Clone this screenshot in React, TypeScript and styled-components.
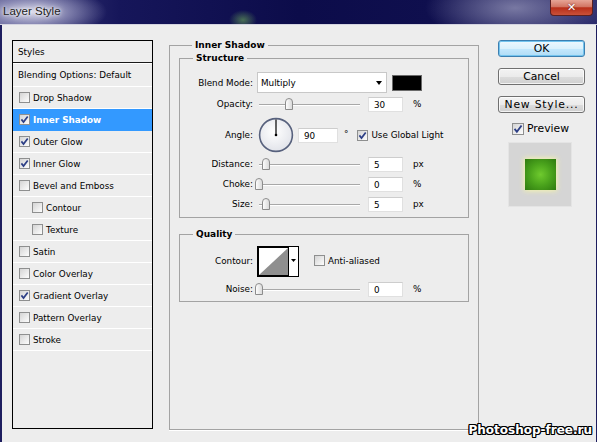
import React from 'react';
import styled, { createGlobalStyle, css } from 'styled-components';

const GlobalStyle = createGlobalStyle`
  html, body {
    margin: 0;
    padding: 0;
    background: #ededed;
  }
  body {
    font-family: "DejaVu Sans", sans-serif;
    font-size: 8.8px;
    color: #000;
  }
`;

const styleItems = [
  { name: 'Drop Shadow', checked: false },
  { name: 'Inner Shadow', checked: true, selected: true },
  { name: 'Outer Glow', checked: true },
  { name: 'Inner Glow', checked: true },
  { name: 'Bevel and Emboss', checked: false },
  { name: 'Contour', checked: false, sub: true },
  { name: 'Texture', checked: false, sub: true },
  { name: 'Satin', checked: false },
  { name: 'Color Overlay', checked: false },
  { name: 'Gradient Overlay', checked: true },
  { name: 'Pattern Overlay', checked: false },
  { name: 'Stroke', checked: false },
];

const App = () => {
  return (
    <Window>
      <GlobalStyle />
      <TitleBar>
        <TitleText>Layer Style</TitleText>
        <CloseButton>✕</CloseButton>
      </TitleBar>
      <Body>
        <StylesPanel>
          <PanelHeader>Styles</PanelHeader>
          <BlendingRow>Blending Options: Default</BlendingRow>
          {styleItems.map((item) => (
            <StyleRow key={item.name} $selected={item.selected} $sub={item.sub}>
              <CheckBox checked={item.checked} />
              <span>{item.name}</span>
            </StyleRow>
          ))}
        </StylesPanel>

        <OuterGroup>
          <Legend>Inner Shadow</Legend>
          <InnerGroup>
            <Legend>Structure</Legend>
            <Row $h={21}>
              <Label>Blend Mode:</Label>
              <Select>
                <span>Multiply</span>
                <Arrow />
              </Select>
              <Swatch />
            </Row>
            <SliderRow label="Opacity:" pos={0.3} value="30" unit="%" top={1} />
            <Row $h={38} $mt={2}>
              <Label>Angle:</Label>
              <Dial />
              <ValueBox $w={40} $ml={4}>90</ValueBox>
              <Degree>°</Degree>
              <CheckBox checked />
              <CheckLabel>Use Global Light</CheckLabel>
            </Row>
            <SliderRow label="Distance:" pos={0.07} value="5" unit="px" />
            <SliderRow label="Choke:" pos={0} value="0" unit="%" />
            <SliderRow label="Size:" pos={0.07} value="5" unit="px" />
          </InnerGroup>
          <InnerGroup $quality>
            <Legend>Quality</Legend>
            <Row $h={30}>
              <Label>Contour:</Label>
              <ContourPicker />
              <AntiAlias>
                <CheckBox checked={false} />
                <CheckLabel>Anti-aliased</CheckLabel>
              </AntiAlias>
            </Row>
            <SliderRow label="Noise:" pos={0} value="0" unit="%" top={3} />
          </InnerGroup>
        </OuterGroup>

        <SideColumn>
          <Button $primary>OK</Button>
          <Button>Cancel</Button>
          <Button $wide>New Style...</Button>
          <PreviewToggle>
            <CheckBox checked size={12} />
            <span>Preview</span>
          </PreviewToggle>
          <PreviewBox>
            <PreviewSquare />
          </PreviewBox>
        </SideColumn>
      </Body>
      <Watermark>Photoshop-free.ru</Watermark>
    </Window>
  );
};

export default App;

const CheckBox = ({ checked, size = 11 }: { checked?: boolean; size?: number }) => (
  <Box $size={size}>
    {checked && (
      <svg width={size - 2} height={size - 2} viewBox="0 0 9 9">
        <path d="M1.4 4.4 L3.5 7 L7.7 1.4" fill="none" stroke="#2d3f86" strokeWidth="1.7" />
      </svg>
    )}
  </Box>
);

const SliderRow = ({
  label,
  pos,
  value,
  unit,
  top = 0,
}: {
  label: string;
  pos: number;
  value: string;
  unit: string;
  top?: number;
}) => (
  <Row $h={20} $mt={top}>
    <Label>{label}</Label>
    <SliderWrap>
      <Track />
      <Thumb width="8" height="12" viewBox="0 0 8 12" style={{ left: Math.round(pos * 101 - 2) }}>
        <defs>
          <linearGradient id="thumbFill" x1="0" y1="0" x2="1" y2="0">
            <stop offset="0" stopColor="#ffffff" />
            <stop offset="1" stopColor="#d8d8d8" />
          </linearGradient>
        </defs>
        <path
          d="M0.5 11.5 V4 Q0.5 0.5 4 0.5 Q7.5 0.5 7.5 4 V11.5 Z"
          fill="url(#thumbFill)"
          stroke="#8c8c8c"
        />
      </Thumb>
    </SliderWrap>
    <ValueBox $w={35} $ml={8}>{value}</ValueBox>
    <Unit>{unit}</Unit>
  </Row>
);

const Dial = () => (
  <DialSvg width="36" height="36" viewBox="0 0 36 36">
    <defs>
      <radialGradient id="dialFill" cx="45%" cy="40%" r="60%">
        <stop offset="0" stopColor="#ffffff" />
        <stop offset="1" stopColor="#e2e4ea" />
      </radialGradient>
    </defs>
    <circle cx="18" cy="18" r="16.4" fill="url(#dialFill)" stroke="#57617d" strokeWidth="1.6" />
    <line x1="18" y1="18" x2="18" y2="2.4" stroke="#000" strokeWidth="1.2" />
    <circle cx="18" cy="18" r="1.3" fill="#000" />
  </DialSvg>
);

const ContourPicker = () => (
  <svg width="42" height="31" viewBox="0 0 42 31" style={{ flexShrink: 0 }}>
    <rect x="0" y="0" width="42" height="31" fill="#000" />
    <rect x="2" y="2" width="29" height="27" fill="#fff" />
    <polygon points="2,29 31,2 31,29" fill="#8f8f8f" />
    <rect x="32" y="1" width="9" height="29" fill="#fff" />
    <polygon points="34,13 39,13 36.5,16" fill="#000" />
  </svg>
);

const Window = styled.div`
  position: relative;
  width: 597px;
  height: 442px;
  display: flex;
  flex-direction: column;
  background: #ededed;
  overflow: hidden;
`;

const TitleBar = styled.div`
  height: 24px;
  flex-shrink: 0;
  display: flex;
  align-items: flex-start;
  border-bottom: 1px solid #d4d4e0;
  background:
    radial-gradient(ellipse 75px 26px at 32px 12px, rgba(226, 226, 240, 0.95), rgba(170, 170, 205, 0.65) 50%, rgba(40, 40, 100, 0) 100%),
    radial-gradient(ellipse 14px 10px at 243px 20px, rgba(120, 190, 90, 0.55), rgba(120, 190, 90, 0)),
    radial-gradient(ellipse 90px 34px at 515px 8px, rgba(130, 130, 170, 0.9), rgba(60, 60, 120, 0) 100%),
    linear-gradient(90deg, #40407e 0%, #16165a 20%, #0c0c4a 50%, #0f0f4e 72%, #2c2c6c 100%);
`;

const TitleText = styled.div`
  padding: 5px 0 0 3px;
  font-family: "Liberation Sans", Arial, sans-serif;
  font-size: 11.5px;
  color: #222;
  text-shadow: 0 0 6px #fff, 0 0 3px #fff;
`;

const CloseButton = styled.div`
  margin-left: auto;
  margin-right: 4px;
  width: 43px;
  height: 16px;
  box-sizing: border-box;
  display: flex;
  align-items: center;
  justify-content: center;
  border: 1px solid #5c2020;
  border-top: none;
  border-radius: 0 0 4px 4px;
  background: linear-gradient(#e6a596 0%, #d27563 45%, #b92f19 52%, #c9513a 100%);
  color: #fff;
  font-family: "DejaVu Sans", sans-serif;
  font-weight: bold;
  font-size: 11px;
  text-shadow: 0 0 2px #5a1010;
`;

const Body = styled.div`
  flex: 1;
  display: flex;
  align-items: flex-start;
  padding: 15px 0 0 10px;
  border-left: 2px solid #1d1d5e;
  border-right: 1px solid #1d1d5e;
`;

const StylesPanel = styled.div`
  width: 141px;
  height: 389px;
  box-sizing: border-box;
  flex-shrink: 0;
  border: 1px solid #000;
  display: flex;
  flex-direction: column;
`;

const PanelHeader = styled.div`
  height: 21px;
  display: flex;
  align-items: center;
  padding-left: 5px;
  border-bottom: 1px solid #1a1a1a;
  box-shadow: 0 1px 0 #fff;
`;

const BlendingRow = styled.div`
  height: 22px;
  display: flex;
  align-items: center;
  padding: 1px 0 0 5px;
  border-bottom: 1px solid #fff;
`;

const StyleRow = styled.div<{ $selected?: boolean; $sub?: boolean }>`
  height: 21px;
  display: flex;
  align-items: center;
  gap: 3px;
  padding-left: ${(p) => (p.$sub ? 19 : 6)}px;
  border-bottom: 1px solid #fff;
  ${(p) =>
    p.$selected &&
    css`
      background: #3399ff;
      color: #fff;
      font-weight: bold;
      border-bottom-color: #3399ff;
    `}
`;

const Box = styled.span<{ $size: number }>`
  width: ${(p) => p.$size}px;
  height: ${(p) => p.$size}px;
  box-sizing: border-box;
  flex-shrink: 0;
  display: inline-flex;
  align-items: center;
  justify-content: center;
  border: 1px solid #8e8f8f;
  background: linear-gradient(135deg, #d4d4d4 0%, #efefef 65%, #fdfdfd 100%);
`;

const OuterGroup = styled.fieldset`
  margin: 0 0 0 16px;
  padding: 2px 9px 0;
  width: 310px;
  height: 390px;
  box-sizing: border-box;
  flex-shrink: 0;
  border: 1px solid #a3a3a3;
  box-shadow: 0 1px 0 #fff;
`;

const InnerGroup = styled.fieldset<{ $quality?: boolean }>`
  margin: ${(p) => (p.$quality ? '11px 0 0' : '0')};
  padding: ${(p) => (p.$quality ? 6 : 8)}px 0 ${(p) => (p.$quality ? 2 : 3)}px;
  border: 1px solid #a3a3a3;
  min-width: 0;
`;

const Legend = styled.legend`
  margin-left: 13px;
  padding: 0 3px;
  line-height: 11px;
  font-weight: bold;
  font-size: 9px;
`;

const Row = styled.div<{ $h: number; $mt?: number }>`
  height: ${(p) => p.$h}px;
  margin-top: ${(p) => p.$mt || 0}px;
  display: flex;
  align-items: center;
`;

const Label = styled.span`
  width: 73px;
  margin-right: 4px;
  text-align: right;
  flex-shrink: 0;
`;

const Select = styled.div`
  width: 130px;
  height: 21px;
  box-sizing: border-box;
  display: flex;
  align-items: center;
  justify-content: space-between;
  padding: 1px 4px 0 3px;
  background: #fff;
  border: 1px solid #c8c8c8;
`;

const Arrow = styled.span`
  width: 0;
  height: 0;
  border-left: 3.5px solid transparent;
  border-right: 3.5px solid transparent;
  border-top: 4px solid #000;
`;

const Swatch = styled.div`
  margin-left: 5px;
  width: 30px;
  height: 16px;
  box-sizing: border-box;
  background: #000;
  border: 1px solid #6a6a6a;
`;

const SliderWrap = styled.div`
  position: relative;
  width: 103px;
  height: 12px;
  flex-shrink: 0;
`;

const Track = styled.div`
  position: absolute;
  left: 2px;
  right: 0;
  top: 6px;
  height: 1px;
  background: #a8a8a8;
  box-shadow: 0 1px 0 #fff;
`;

const Thumb = styled.svg`
  position: absolute;
  top: 0;
`;

const ValueBox = styled.div<{ $w: number; $ml: number }>`
  width: ${(p) => p.$w}px;
  height: 15px;
  margin-left: ${(p) => p.$ml}px;
  box-sizing: border-box;
  flex-shrink: 0;
  display: flex;
  align-items: center;
  padding: 1px 0 0 5px;
  background: #fff;
  border: 1px solid #e0e0e0;
  border-top-color: #cdcdcd;
`;

const Unit = styled.span`
  margin-left: 10px;
`;

const DialSvg = styled.svg`
  margin-left: 1px;
  flex-shrink: 0;
`;

const Degree = styled.span`
  margin: -3px 9px 0 6px;
`;

const CheckLabel = styled.span`
  margin-left: 3px;
`;

const AntiAlias = styled.div`
  margin-left: 15px;
  margin-bottom: 1px;
  display: flex;
  align-items: center;
`;

const SideColumn = styled.div`
  margin-left: 19px;
  width: 87px;
  flex-shrink: 0;
  display: flex;
  flex-direction: column;
  gap: 11px;
  font-size: 10.8px;
`;

const Button = styled.button<{ $primary?: boolean; $wide?: boolean }>`
  width: 87px;
  height: 17px;
  padding: 0;
  box-sizing: border-box;
  font-family: "DejaVu Sans", sans-serif;
  font-size: 10.8px;
  line-height: 15px;
  color: #000;
  letter-spacing: ${(p) => (p.$wide ? '0.8px' : '0')};
  border: 1px solid #707070;
  border-radius: 3px;
  background: linear-gradient(#f3f3f3 0%, #ebebeb 50%, #dddddd 51%, #cfcfcf 100%);
  box-shadow: inset 0 0 0 1px rgba(255, 255, 255, 0.75);
  ${(p) =>
    p.$primary &&
    css`
      border-color: #3c7fb1;
      background: linear-gradient(#eef8fe 0%, #dcf1fc 50%, #c4e8fd 51%, #b0dcf6 100%);
      box-shadow: inset 0 0 0 1px #74c4ee;
    `}
`;

const PreviewToggle = styled.div`
  margin-top: -2px;
  padding-left: 14px;
  display: flex;
  align-items: center;
  gap: 3px;
`;

const PreviewBox = styled.div`
  margin: -4px 0 0 10px;
  width: 64px;
  height: 65px;
  box-sizing: border-box;
  display: flex;
  align-items: center;
  justify-content: center;
  background: #d5d5d5;
  border: 1px solid #e4e4e4;
`;

const PreviewSquare = styled.div`
  width: 31px;
  height: 31px;
  background: radial-gradient(circle at 50% 50%, #6fca2e 0%, #4aa31c 50%, #2e7a0f 100%);
  box-shadow: 0 0 5px 1px rgba(246, 246, 170, 0.95);
`;

const Watermark = styled.div`
  position: absolute;
  right: 5px;
  bottom: 5px;
  font-family: "DejaVu Sans", sans-serif;
  font-weight: bold;
  font-size: 12px;
  color: #fff;
  text-shadow: 1px 0 0 #000, -1px 0 0 #000, 0 1px 0 #000, 0 -1px 0 #000, 1px 1px 0 #000, -1px -1px 0 #000,
    1px -1px 0 #000, -1px 1px 0 #000;
`;
